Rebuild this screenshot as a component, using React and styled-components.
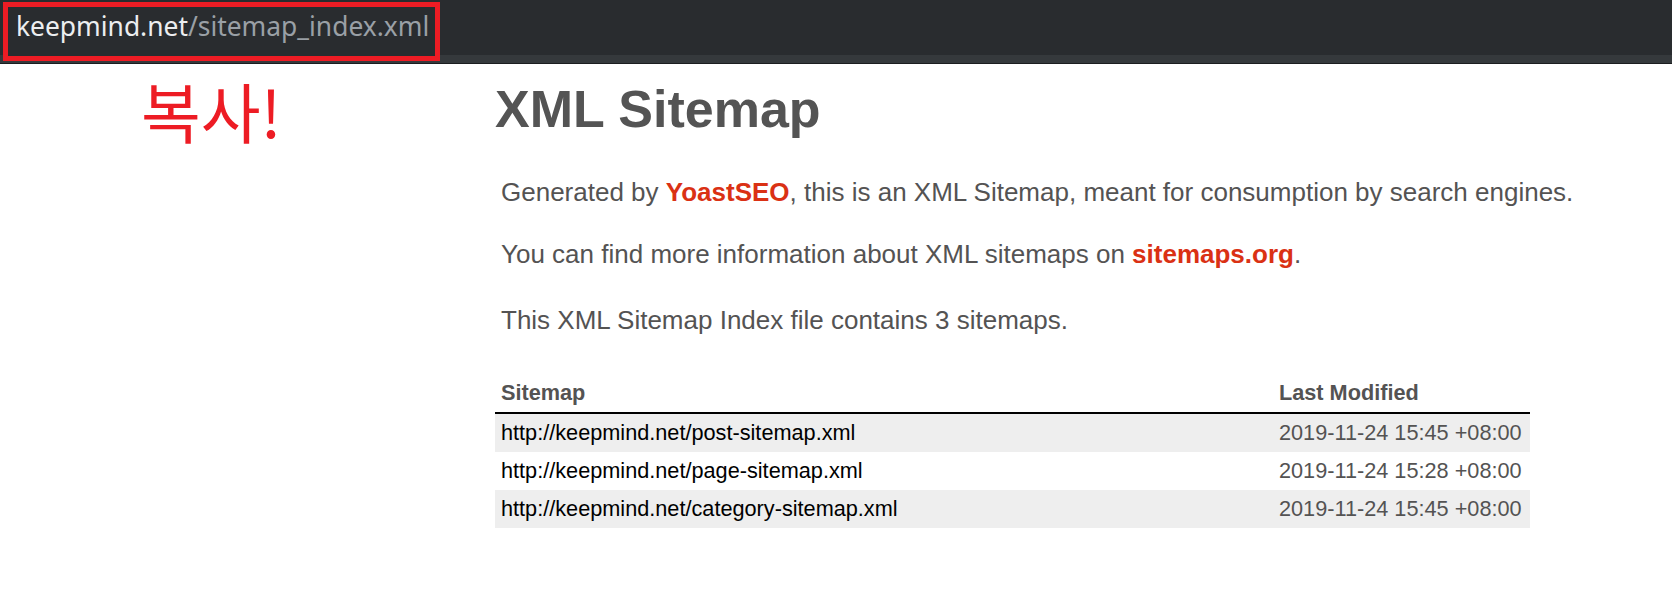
import React from "react";
import styled, { createGlobalStyle } from "styled-components";

const GlobalStyle = createGlobalStyle`
  body {
    margin: 0;
    background: #fff;
  }
`;

const sitemaps = [
  { loc: "http://keepmind.net/post-sitemap.xml", lastmod: "2019-11-24 15:45 +08:00" },
  { loc: "http://keepmind.net/page-sitemap.xml", lastmod: "2019-11-24 15:28 +08:00" },
  { loc: "http://keepmind.net/category-sitemap.xml", lastmod: "2019-11-24 15:45 +08:00" },
];

const App = () => {
  return (
    <React.Fragment>
      <GlobalStyle />
      <TopBar>
        <AddressField>
          <Host>keepmind.net</Host>/sitemap_index.xml
        </AddressField>
      </TopBar>
      <Main>
        <Aside>
          <Note>복사!</Note>
        </Aside>
        <Content>
          <Title>XML Sitemap</Title>
          <Para>
            Generated by <RedLink href="#">YoastSEO</RedLink>, this is an XML
            Sitemap, meant for consumption by search engines.
          </Para>
          <Para>
            You can find more information about XML sitemaps on{" "}
            <RedLink href="#">sitemaps.org</RedLink>.
          </Para>
          <Para $spaced>This XML Sitemap Index file contains 3 sitemaps.</Para>
          <Table>
            <thead>
              <tr>
                <Th $first>Sitemap</Th>
                <Th>Last Modified</Th>
              </tr>
            </thead>
            <tbody>
              {sitemaps.map((item, i) => (
                <Row key={item.loc} $odd={i % 2 === 0}>
                  <Td>
                    <UrlLink href="#">{item.loc}</UrlLink>
                  </Td>
                  <Td>{item.lastmod}</Td>
                </Row>
              ))}
            </tbody>
          </Table>
        </Content>
      </Main>
    </React.Fragment>
  );
};

const TopBar = styled.header`
  display: flex;
  align-items: flex-start;
  height: 64px;
  box-sizing: border-box;
  padding: 2px 0 0 3px;
  background: linear-gradient(
    to bottom,
    #292c2f 0,
    #292c2f 55px,
    #35393c 55px,
    #35393c 63px,
    #1b1d1f 63px
  );
`;

const AddressField = styled.div`
  width: 437px;
  height: 59px;
  box-sizing: border-box;
  border: 5px solid #ed1c24;
  background: #292c2f;
  padding: 6px 0 0 8px;
  font-family: "Noto Sans", "Open Sans", sans-serif;
  font-size: 26.4px;
  line-height: 27px;
  color: #9aa0a6;
  white-space: nowrap;
`;

const Host = styled.span`
  color: #eceef0;
`;

const Main = styled.main`
  display: flex;
`;

const Aside = styled.div`
  width: 495px;
  flex-shrink: 0;
  box-sizing: border-box;
  padding: 14px 0 0 141px;
`;

const Note = styled.div`
  font-family: "Noto Sans CJK KR", sans-serif;
  font-size: 65px;
  line-height: 1;
  color: #ed1c24;
`;

const Content = styled.div`
  width: 1035px;
  padding-top: 20px;
  font-family: "Liberation Sans", Arial, Helvetica, sans-serif;
  color: #545353;
`;

const Title = styled.h1`
  margin: 0 0 42px;
  font-size: 52px;
  line-height: 51px;
  font-weight: bold;
  color: #545454;
`;

const Para = styled.p`
  margin: ${(p) => (p.$spaced ? "36px" : "0")} 6px 32px;
  font-size: 26px;
  line-height: 30px;
  white-space: nowrap;
`;

const RedLink = styled.a`
  color: #da3114;
  font-weight: bold;
  text-decoration: none;
`;

const Table = styled.table`
  width: 1035px;
  margin-top: 39px;
  border-collapse: collapse;
  font-size: 21.7px;
  line-height: 26px;
`;

const Th = styled.th`
  width: ${(p) => (p.$first ? "778px" : "auto")};
  box-sizing: border-box;
  padding: 6px;
  text-align: left;
  border-bottom: 2px solid #000;
  color: #545353;
`;

const Row = styled.tr`
  background: ${(p) => (p.$odd ? "#eee" : "#fff")};
`;

const Td = styled.td`
  padding: 6px;
  height: 38px;
  box-sizing: border-box;
`;

const UrlLink = styled.a`
  color: #000;
  text-decoration: none;
`;

export default App;
